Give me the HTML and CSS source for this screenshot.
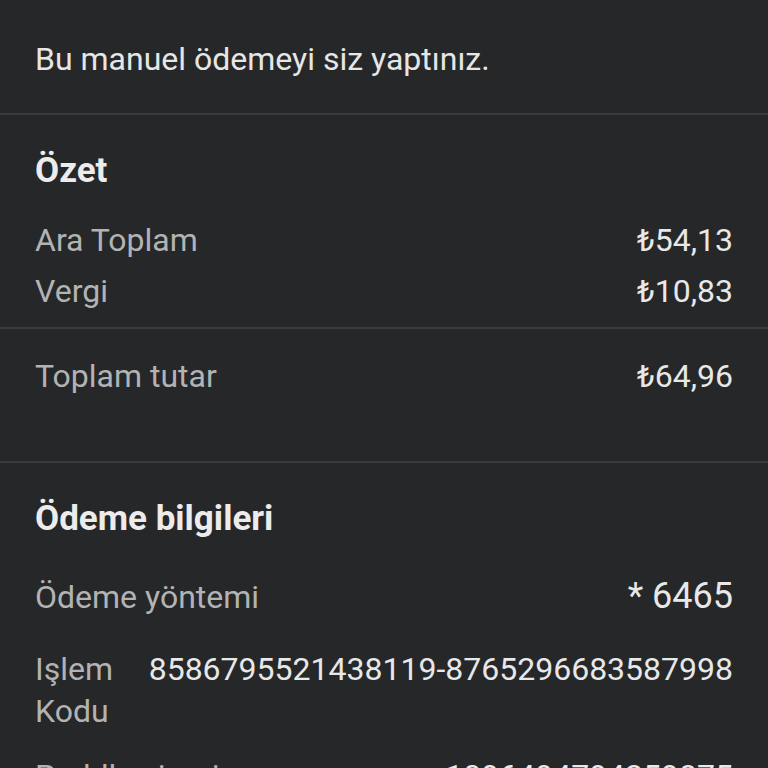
FILE: index.html
```html
<!DOCTYPE html>
<html>
<head>
<meta charset="UTF-8">
<title>Ödeme</title>
<link rel="stylesheet" href="styles.css">
</head>
<body>
<div class="note">Bu manuel ödemeyi siz yaptınız.</div>

<div class="section summary">
	<h2 class="title">Özet</h2>
	<div class="row"><span class="label">Ara Toplam</span><span class="value">₺54,13</span></div>
	<div class="row"><span class="label">Vergi</span><span class="value">₺10,83</span></div>
</div>

<div class="section total">
	<div class="row"><span class="label">Toplam tutar</span><span class="value">₺64,96</span></div>
</div>

<div class="section">
	<h2 class="title">Ödeme bilgileri</h2>
	<div class="row info"><span class="label">Ödeme yöntemi</span><span class="value card">* 6465</span></div>
	<div class="row info"><span class="label">Işlem Kodu</span><span class="value code">8586795521438119-8765296683587998</span></div>
	<div class="row info last"><span class="label">Paddle sipariş no</span><span class="value">1096494794259875</span></div>
</div>
</body>
</html>
```

FILE: styles.css
```css
body{margin:0;background:#262729;font-family:Roboto,"Noto Sans",sans-serif;color:#e6e6e6;font-size:32px;}
.note{padding:41px 35px 36px;border-bottom:2px solid #3a3b3d;line-height:36px;}
.section{padding:0 35px;border-bottom:2px solid #3a3b3d;}
.title{margin:0;padding:36px 0 24px;font-size:35px;font-weight:700;line-height:40px;color:#ececec;}
.row{display:flex;justify-content:space-between;align-items:baseline;gap:30px;line-height:51px;}
.label{color:#b3b3b3;}
.value{color:#e8e8e8;text-align:right;}
.card{font-size:36px;}
.code{white-space:nowrap;}
.summary{padding-bottom:10px;}
.total{padding-top:22px;padding-bottom:59px;}
.section .info{line-height:42px;padding:15px 0;}
.title + .info{margin-top:-3px;}
.section .last{padding-top:8px;}
```
